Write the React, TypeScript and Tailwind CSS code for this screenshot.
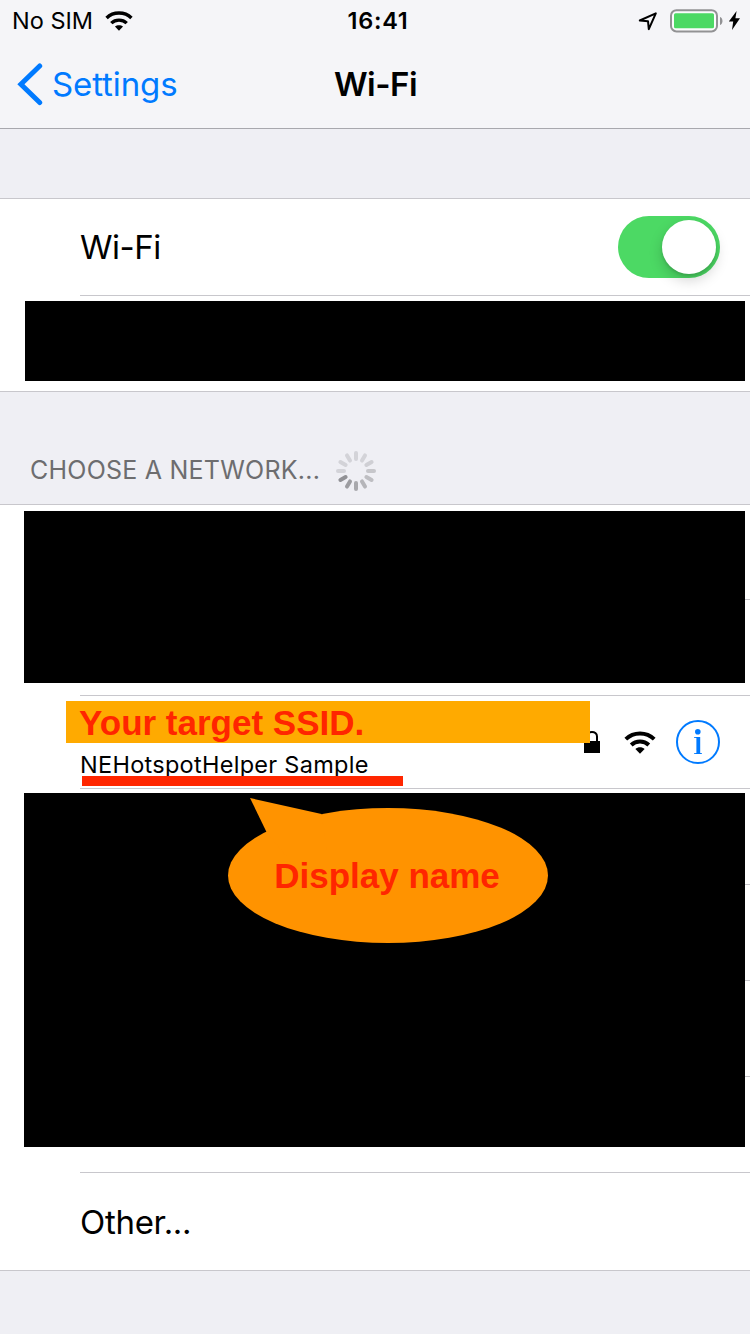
import type { ReactNode } from "react";

function WifiGlyph({ className }: { className: string }) {
  return (
    <svg viewBox="0 0 32 24" className={className} fill="none" stroke="#000" strokeWidth="3.9">
      <path d="M1.8 9.2 C9.5 1.6 22.5 1.6 30.2 9.2" />
      <path d="M7.2 15 C12 10.4 20 10.4 24.8 15" />
      <path d="M11.4 18.9 C13.8 16.8 18.2 16.8 20.6 18.9 L16 23.7 Z" fill="#000" stroke="none" />
    </svg>
  );
}

const spokes = [
  "#d3d3d8", "#d3d3d8", "#cfcfd4", "#c6c6ca", "#bebec2", "#b5b5b9",
  "#a9a9ad", "#9d9da1", "#919195", "#d3d3d8", "#d3d3d8", "#d3d3d8",
];

function Spinner() {
  return (
    <svg viewBox="-20 -20 40 40" className="h-10 w-10">
      {spokes.map((color, i) => (
        <rect key={i} x="-2" y="-20" width="4" height="10" rx="2" fill={color} transform={`rotate(${i * 30})`} />
      ))}
    </svg>
  );
}

function StatusBar() {
  return (
    <div className="grid h-[41px] grid-cols-[1fr_auto_1fr] items-center pl-3 pr-[9px]">
      <div className="flex items-center">
        <span className="w-[93px] text-[23.5px]">No SIM</span>
        <WifiGlyph className="mb-px h-[21px] w-7" />
      </div>
      <span className="pl-[3px] text-[23.5px] font-semibold tracking-[0.7px]">16:41</span>
      <div className="flex items-center justify-end">
        <svg viewBox="0 0 20 20" className="mr-[11px] h-5 w-5" fill="none" stroke="#000" strokeWidth="2" strokeLinejoin="round">
          <path d="M1.8 9.5 L17.8 2.3 L10.8 18.2 L10 10.2 Z" />
        </svg>
        <svg viewBox="0 0 54 24" className="mr-[6px] h-6 w-[54px]">
          <rect x="2" y="1.2" width="46" height="21.2" rx="5.5" fill="#fbfbfd" stroke="#929294" strokeWidth="2" />
          <rect x="5" y="4.3" width="40" height="15" rx="1.5" fill="#4cd964" />
          <path d="M51 8 C54.3 9 54.3 15 51 16 Z" fill="#929294" />
        </svg>
        <svg viewBox="0 0 12 20" className="h-5 w-3" fill="#000">
          <path d="M7.6 0 L-0.2 10.5 H4.2 L3 19 L11 7.3 H6.4 Z" />
        </svg>
      </div>
    </div>
  );
}

function NavBar() {
  return (
    <div className="grid h-[87px] grid-cols-[1fr_auto_1fr] items-center px-4">
      <div className="flex items-center gap-2 text-[#007aff]">
        <svg viewBox="0 0 27 44" className="h-11 w-[27px]" fill="none" stroke="currentColor" strokeWidth="5" strokeLinecap="round" strokeLinejoin="miter">
          <path d="M23.7 3 L4.9 21.2 L23.7 39.5" />
        </svg>
        <span className="pl-px text-[33px] tracking-[-0.1px]">Settings</span>
      </div>
      <h1 className="pl-px text-[33px] font-semibold tracking-[-0.5px]">Wi-Fi</h1>
      <div />
    </div>
  );
}

function Masked({ className, children }: { className: string; children?: ReactNode }) {
  return <div className={`relative bg-black ${className}`}>{children}</div>;
}

function Divider() {
  return <div className="ml-20 h-px bg-[#c8c7cc]" />;
}

function Edge() {
  return <div className="h-px w-[5px] bg-[#c8c7cc]" />;
}

function Callout() {
  return (
    <div className="absolute left-[204px] top-[5px] flex h-[145px] w-[320px] items-center justify-center pr-[2px] pt-[10px]">
      <svg viewBox="0 0 320 145" className="absolute inset-0 h-[145px] w-[320px]" fill="#ff9300">
        <ellipse cx="160" cy="77.5" rx="160" ry="67.5" />
        <path d="M22 0 L93.5 16 L100 60 L60 60 L38.5 34 Z" />
      </svg>
      <span className="relative font-['Liberation_Sans',sans-serif] text-[35px] font-bold text-[#ff2600]">Display name</span>
    </div>
  );
}

export default function App() {
  return (
    <div className="flex h-[1334px] w-[750px] flex-col overflow-hidden whitespace-nowrap bg-[#efeff4] font-['Inter',sans-serif] leading-none text-black">
      <header className="h-[129px] shrink-0 border-b border-[#a8a8ae] bg-[#f5f5f8]">
        <StatusBar />
        <NavBar />
      </header>

      <section className="mt-[69px] h-[194px] shrink-0 border-y border-[#c8c7cc] bg-white">
        <div className="flex h-24 items-center justify-between pl-20 pr-[30px]">
          <span className="text-[33px] tracking-[-0.5px]">Wi-Fi</span>
          <div className="flex h-[62px] w-[102px] items-center justify-end rounded-full bg-[#4cd964] pr-1">
            <div className="h-[54px] w-[54px] rounded-full bg-white shadow-[0_6px_14px_rgba(0,0,0,0.18),0_2px_3px_rgba(0,0,0,0.12)]" />
          </div>
        </div>
        <Divider />
        <Masked className="ml-[25px] mt-[5px] h-20 w-[720px]" />
      </section>

      <div className="flex h-28 shrink-0 items-center gap-4 pl-[30px] pt-[46px]">
        <span className="w-[290px] pb-[2px] text-[25px] tracking-[0.23px] text-[#6d6d6f]">CHOOSE A NETWORK...</span>
        <Spinner />
      </div>

      <section className="h-[767px] shrink-0 border-y border-[#c8c7cc] bg-white">
        <div className="flex h-[190px] pl-6 pt-[6px]">
          <Masked className="h-[172px] w-[721px]" />
          <div className="pt-[88px]"><Edge /></div>
        </div>
        <Divider />
        <div className="flex h-[92px] justify-between pr-[30px]">
          <div className="flex flex-col pl-[66px] pt-[5px]">
            <div className="relative z-10 flex h-[42px] w-[524px] items-center bg-[#ffaa00] pl-[13px] font-['Liberation_Sans',sans-serif] text-[35px] font-bold text-[#ff2600]">
              Your target SSID.
            </div>
            <span className="ml-[14px] h-[33px] pt-[10px] text-[23.5px] tracking-[0.28px]">NEHotspotHelper Sample</span>
            <div className="relative ml-4 h-[10px] w-[321px] shrink-0 bg-[#ff2600]" />
          </div>
          <div className="flex items-center">
            <svg viewBox="0 0 16 22" className="-ml-[6px] mr-6 h-[22px] w-4">
              <path d="M3 11 V5.5 C3 -0.5 13 -0.5 13 5.5 V11" fill="none" stroke="#000" strokeWidth="2" />
              <rect y="10" width="16" height="12" fill="#000" />
            </svg>
            <WifiGlyph className="mr-5 h-6 w-8" />
            <svg viewBox="0 0 44 44" className="h-11 w-11" fill="#007aff">
              <circle cx="22" cy="22" r="21" fill="none" stroke="#007aff" strokeWidth="2" />
              <circle cx="21.8" cy="11.7" r="2.8" />
              <path d="M18 17 H24.2 V33 L26 33.3 V34 H18 V33.3 L20.4 33 V18 L18 17.8 Z" />
            </svg>
          </div>
        </div>
        <Divider />
        <div className="flex h-[383px] pl-6 pt-1">
          <Masked className="h-[354px] w-[721px]"><Callout /></Masked>
          <div className="flex flex-col gap-[95px] pt-[91px]"><Edge /><Edge /><Edge /></div>
        </div>
        <Divider />
        <div className="flex h-[97px] items-center pl-20 pt-px text-[33px] tracking-[-0.3px]">Other...</div>
      </section>
    </div>
  );
}
